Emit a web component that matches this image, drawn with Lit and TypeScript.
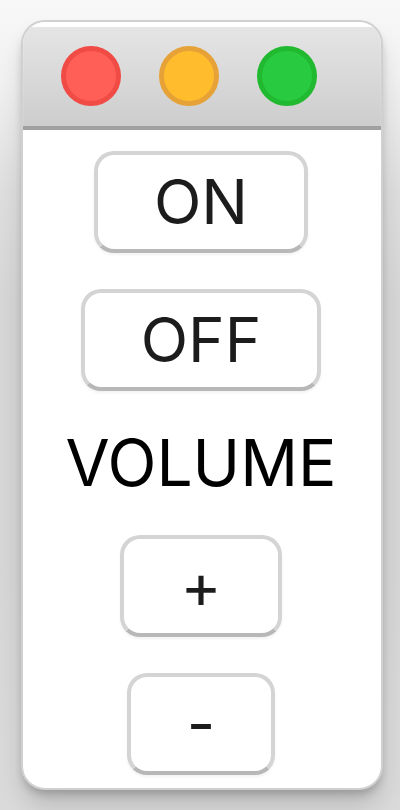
import { LitElement, html, css } from "lit";
import { customElement, state } from "lit/decorators.js";

@customElement("app-root")
export class AppRoot extends LitElement {
  @state() private on = false;
  @state() private volume = 5;

  static styles = css`
    :host {
      display: block;
      box-sizing: border-box;
      min-height: 100vh;
      padding: 22px 19px 22px 23px;
      overflow: hidden;
      font-family: Inter, Roboto, "Liberation Sans", sans-serif;
      font-size: 62px;
      line-height: 72px;
      color: #000;
      background: linear-gradient(#f8f8f8, #f1f1f1 80px, #dedede 190px, #d6d6d6 300px, #d6d6d6 560px, #dadada);
    }
    .window {
      border-radius: 22px;
      overflow: hidden;
      background: #fff;
      box-shadow:
        0 0 0 2px #d0d0d0,
        0 6px 8px rgba(0, 0, 0, 0.2),
        0 18px 24px rgba(0, 0, 0, 0.14);
    }
    .titlebar {
      display: flex;
      gap: 38px;
      padding: 24px 38px 20px;
      border-bottom: 4px solid #a0a0a0;
      background: linear-gradient(#e6e6e6, #cdcdcd);
      box-shadow: inset 0 5px 1px #fff;
    }
    .light {
      box-sizing: border-box;
      width: 60px;
      height: 60px;
      padding: 0;
      border: 5px solid;
      border-radius: 50%;
    }
    .close {
      background: #ff5f57;
      border-color: #f04b45;
    }
    .minimize {
      background: #ffbd2e;
      border-color: #e6a236;
    }
    .zoom {
      background: #28ca40;
      border-color: #20b930;
    }
    .content {
      display: flex;
      flex-direction: column;
      align-items: center;
      gap: 36px;
      padding: 21px 2px 13px 0;
    }
    .label {
      margin: 0;
      font-size: 64px;
    }
    .push {
      padding: 11px 56px;
      border: 4px solid #d4d4d4;
      border-bottom-color: #b8b8b8;
      border-radius: 20px;
      background: #fff;
      color: #1c1c1c;
      font: inherit;
      box-shadow: 0 2px 3px rgba(0, 0, 0, 0.05);
    }
  `;

  render() {
    return html`
      <main class="window">
        <header class="titlebar">
          <button class="light close" aria-label="Close"></button>
          <button class="light minimize" aria-label="Minimize"></button>
          <button class="light zoom" aria-label="Zoom"></button>
        </header>
        <div class="content">
          <button class="push" aria-pressed=${this.on} @click=${() => (this.on = true)}>ON</button>
          <button class="push" aria-pressed=${!this.on} @click=${() => (this.on = false)}>OFF</button>
          <p class="label">VOLUME</p>
          <button class="push" aria-label="+" @click=${() => (this.volume += 1)}>+</button>
          <button class="push" aria-label="-" @click=${() => (this.volume -= 1)}>-</button>
        </div>
      </main>
    `;
  }
}
